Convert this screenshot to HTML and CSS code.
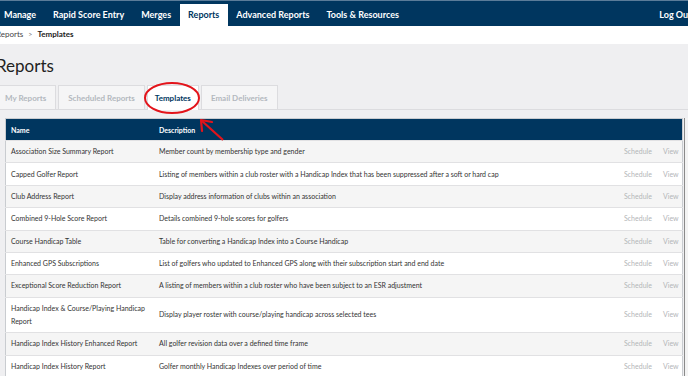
FILE: index.html
```html
<!DOCTYPE html>
<html lang="en">
<head>
    <meta charset="UTF-8">
    <title>Reports - Templates</title>
    <link rel="stylesheet" href="styles.css">
</head>
<body>
    <nav class="topnav">
        <a class="nav-item">Manage</a>
        <a class="nav-item">Rapid Score Entry</a>
        <a class="nav-item">Merges</a>
        <a class="nav-item active">Reports</a>
        <a class="nav-item">Advanced Reports</a>
        <a class="nav-item">Tools &amp; Resources</a>
        <a class="nav-item logout">Log Out</a>
    </nav>

    <div class="crumbs">
        <span class="crumb">Reports</span>
        <span class="sep">&gt;</span>
        <span class="crumb current">Templates</span>
    </div>

    <main class="page">
        <h1 class="title">Reports</h1>

        <div class="tabs">
            <div class="tab first">My Reports</div>
            <div class="tab">Scheduled Reports</div>
            <div class="tab active">Templates</div>
            <div class="tab">Email Deliveries</div>
        </div>

        <div class="table-wrap">
            <table class="reports">
                <thead>
                    <tr>
                        <th class="col-name">Name</th>
                        <th>Description</th>
                        <th class="col-act"></th>
                        <th class="col-act2"></th>
                    </tr>
                </thead>
                <tbody>
                    <tr>
                        <td>Association Size Summary Report</td>
                        <td>Member count by membership type and gender</td>
                        <td class="act">Schedule</td>
                        <td class="act view">View</td>
                    </tr>
                    <tr>
                        <td>Capped Golfer Report</td>
                        <td>Listing of members within a club roster with a Handicap Index that has been suppressed after a soft or hard cap</td>
                        <td class="act">Schedule</td>
                        <td class="act view">View</td>
                    </tr>
                    <tr>
                        <td>Club Address Report</td>
                        <td>Display address information of clubs within an association</td>
                        <td class="act">Schedule</td>
                        <td class="act view">View</td>
                    </tr>
                    <tr>
                        <td>Combined 9-Hole Score Report</td>
                        <td>Details combined 9-hole scores for golfers</td>
                        <td class="act">Schedule</td>
                        <td class="act view">View</td>
                    </tr>
                    <tr>
                        <td>Course Handicap Table</td>
                        <td>Table for converting a Handicap Index into a Course Handicap</td>
                        <td class="act">Schedule</td>
                        <td class="act view">View</td>
                    </tr>
                    <tr>
                        <td>Enhanced GPS Subscriptions</td>
                        <td>List of golfers who updated to Enhanced GPS along with their subscription start and end date</td>
                        <td class="act">Schedule</td>
                        <td class="act view">View</td>
                    </tr>
                    <tr>
                        <td>Exceptional Score Reduction Report</td>
                        <td>A listing of members within a club roster who have been subject to an ESR adjustment</td>
                        <td class="act">Schedule</td>
                        <td class="act view">View</td>
                    </tr>
                    <tr>
                        <td>Handicap Index &amp; Course/Playing Handicap Report</td>
                        <td>Display player roster with course/playing handicap across selected tees</td>
                        <td class="act">Schedule</td>
                        <td class="act view">View</td>
                    </tr>
                    <tr>
                        <td>Handicap Index History Enhanced Report</td>
                        <td>All golfer revision data over a defined time frame</td>
                        <td class="act">Schedule</td>
                        <td class="act view">View</td>
                    </tr>
                    <tr>
                        <td>Handicap Index History Report</td>
                        <td>Golfer monthly Handicap Indexes over period of time</td>
                        <td class="act">Schedule</td>
                        <td class="act view">View</td>
                    </tr>
                </tbody>
            </table>
            <div class="scrollbar"></div>
        </div>

        <!-- red annotation drawn over the tabs -->
        <svg class="markup" width="260" height="80" viewBox="0 0 260 80">
            <ellipse cx="172" cy="18" rx="27" ry="15" fill="none" stroke="#e3141b" stroke-width="2"/>
            <path d="M223 60 L202 41" fill="none" stroke="#e3141b" stroke-width="2.2"/>
            <path d="M201 40 L212 42 M201 40 L202 51" fill="none" stroke="#e3141b" stroke-width="2.2" stroke-linecap="round"/>
        </svg>
    </main>
</body>
</html>
```

FILE: styles.css
```css
html, body {
    margin: 0;
    padding: 0;
}

body {
    width: 688px;
    height: 376px;
    overflow: hidden;
    font-family: Lato, "Open Sans", sans-serif;
    color: #333;
    background-color: #efeff1;
}

.topnav {
    display: flex;
    align-items: flex-end;
    height: 25px;
    background-color: #00365f;
    border-top: 1px solid #5b7c99;
}

.nav-item {
    display: block;
    padding: 0 8.5px;
    height: 22px;
    line-height: 22px;
    font-size: 9px;
    font-weight: bold;
    color: #fff;
}

.nav-item:first-child {
    padding-left: 4px;
}

.nav-item.active {
    background-color: #fff;
    color: #00365f;
}

.nav-item.logout {
    margin-left: auto;
    margin-right: -12px;
}

.crumbs {
    height: 18px;
    line-height: 17px;
    background-color: #fff;
    font-size: 8px;
    color: #444;
    margin-left: -4px;
}

.crumbs .sep {
    margin: 0 3px;
    color: #777;
    font-size: 7px;
}

.crumbs .current {
    color: #222;
    font-weight: bold;
}

.page {
    position: relative;
    padding-top: 11px;
}

.title {
    margin: 0 0 0 -4px;
    font-size: 17px;
    font-weight: normal;
    color: #222;
    line-height: 22px;
}

.tabs {
    display: flex;
    gap: 2px;
    margin-top: 8px;
    height: 24px;
    border-bottom: 1px solid #dcdcdf;
}

.tab {
    padding: 0 9px;
    height: 24px;
    line-height: 24px;
    font-size: 8px;
    font-weight: bold;
    color: #b3b8be;
    background-color: #f5f5f6;
    border: 1px solid #dcdcdf;
    border-bottom: none;
    box-sizing: border-box;
}

.tab.first {
    margin-left: -10px;
    padding-left: 14px;
}

.tab.active {
    padding: 0 7px;
    background-color: #fff;
    color: #00365f;
    height: 25px;
}

.table-wrap {
    display: flex;
    margin-top: 8px;
    padding-left: 5px;
}

.reports {
    width: 679px;
    table-layout: fixed;
    border-collapse: collapse;
    font-size: 7px;
    color: #333;
    border: 1px solid #c9ccd0;
}

.reports th {
    height: 21px;
    padding: 0 5px;
    text-align: left;
    background-color: #00365f;
    color: #fff;
    font-weight: bold;
}

.reports td {
    padding: 4px 5px;
    border-top: 1px solid #e1e1e3;
    line-height: 13px;
}

.reports td:first-child {
    padding-right: 0;
}

.reports tbody tr:nth-child(odd) td {
    background-color: #f5f5f5;
}

.reports tbody tr:nth-child(even) td {
    background-color: #fff;
}

.col-name {
    width: 138px;
}

.reports th.col-act {
    width: 30px;
    padding: 0 6px;
}

.reports th.col-act2 {
    width: 14px;
    padding: 0 5px 0 6px;
}

.reports td.act {
    color: #b3b5b8;
    padding: 4px 3px 4px 9px;
}

.reports td.view {
    padding: 4px 5px 4px 6px;
}

.scrollbar {
    width: 3px;
    margin-left: 1px;
    background-color: #f3f3f3;
    border-left: 1px solid #8a8a8a;
    height: 260px;
}

.markup {
    position: absolute;
    left: 0;
    top: 36px;
}
```
